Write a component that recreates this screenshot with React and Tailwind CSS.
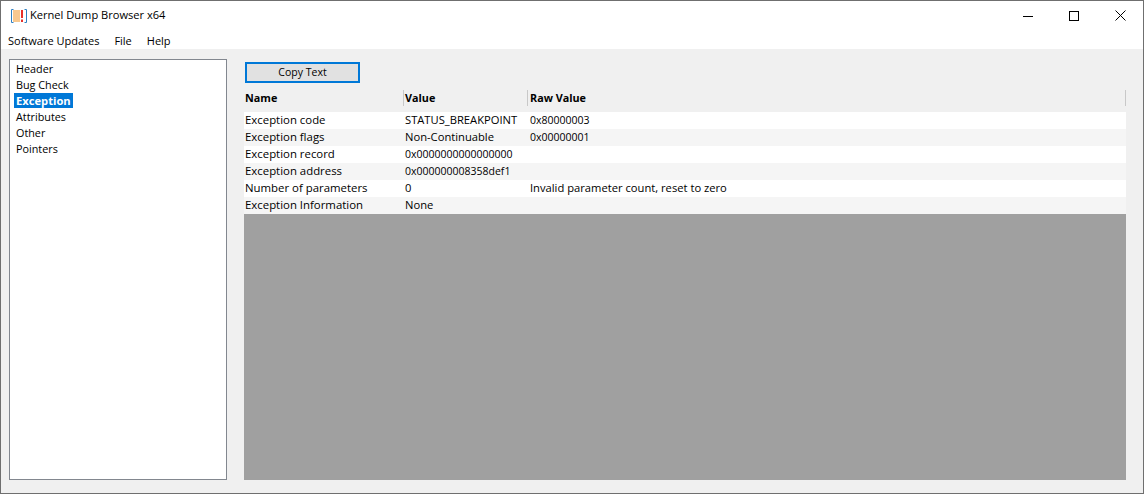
import React from "react";

const font = "font-['Open_Sans','Noto_Sans',sans-serif]";

const sections = ["Header", "Bug Check", "Exception", "Attributes", "Other", "Pointers"];

const rows = [
  ["Exception code", "STATUS_BREAKPOINT", "0x80000003"],
  ["Exception flags", "Non-Continuable", "0x00000001"],
  ["Exception record", "0x0000000000000000", ""],
  ["Exception address", "0x000000008358def1", ""],
  ["Number of parameters", "0", "Invalid parameter count, reset to zero"],
  ["Exception Information", "None", ""],
];

// digits in the original font run narrower than Open Sans
const cellSize = (text) => (text.startsWith("0x") ? "text-[10.5px]" : "text-[11.2px]");

const AppIcon = () => (
  <svg width="18" height="16" viewBox="0 0 18 16" className="ml-[9px] mr-[2px]">
    <path d="M3.5 1.5H1.5V14.5H3.5" fill="none" stroke="#2f7fc1" strokeWidth="1" />
    <path d="M14.5 1.5H16.5V14.5H14.5" fill="none" stroke="#2f7fc1" strokeWidth="1" />
    <rect x="3" y="2" width="7" height="12" fill="#f8c88f" />
    <rect x="11" y="2" width="2" height="8" fill="#e8302a" />
    <rect x="11" y="11.5" width="2" height="2.5" fill="#e8302a" />
  </svg>
);

const WindowButtons = () => (
  <div className="ml-auto flex h-full items-center">
    <div className="flex h-full w-[46px] items-center justify-center">
      <svg width="10" height="10" viewBox="0 0 10 10"><path d="M0 5.5H10" stroke="#000" strokeWidth="1" /></svg>
    </div>
    <div className="flex h-full w-[46px] items-center justify-center">
      <svg width="10" height="10" viewBox="0 0 10 10"><rect x="0.5" y="0.5" width="9" height="9" fill="none" stroke="#000" strokeWidth="1" /></svg>
    </div>
    <div className="flex h-full w-[46px] items-center justify-center">
      <svg width="11" height="11" viewBox="0 0 11 11"><path d="M0.5 0.5L10.5 10.5M10.5 0.5L0.5 10.5" stroke="#000" strokeWidth="1" /></svg>
    </div>
  </div>
);

const App = () => {
  return (
    <div className={`flex h-[494px] w-[1144px] flex-col border border-[#6f6f6f] bg-[#f0f0f0] text-[11.4px] text-black ${font}`}>
      <div className="flex h-[29px] shrink-0 items-center bg-white">
        <AppIcon />
        <span className="text-[11.1px]">Kernel Dump Browser x64</span>
        <WindowButtons />
      </div>
      <div className="flex h-[19px] shrink-0 items-center gap-[15px] bg-white pl-[7px] pt-[3px] text-[11px]">
        <span>Software Updates</span>
        <span>File</span>
        <span>Help</span>
      </div>
      <div className="flex min-h-0 flex-1 pt-[10px] pb-[13px] pl-[8px] pr-[17px]">
        <div className="h-full w-[218px] shrink-0 border border-[#82878f] bg-white pl-[4px] pt-[1px] text-[10.8px]">
          {sections.map((s) =>
            s === "Exception" ? (
              <div key={s} className="flex h-[16px] items-start">
                <span className="bg-[#0078d7] px-[2px] text-[11.2px] font-bold leading-[15px] text-white">{s}</span>
              </div>
            ) : (
              <div key={s} className="flex h-[16px] items-center pl-[2px]">{s}</div>
            )
          )}
        </div>
        <div className="ml-[17px] flex min-w-0 flex-1 flex-col">
          <div className="pl-[1px] pt-[3px]">
            <button className="block h-[21px] w-[115px] border-2 border-[#0078d7] bg-[#e1e1e1] pb-[1px] text-center text-[10.5px] leading-[15px]">
              Copy Text
            </button>
          </div>
          <div className="mt-[6px] flex h-[22px] shrink-0 items-center pb-[4px] text-[10.8px] font-bold">
            <div className="w-[159px] pl-[1px]">Name</div>
            <div className="w-[124px] border-l border-[#c8c8c8] pl-[1px]">Value</div>
            <div className="flex-1 border-l border-r border-[#c8c8c8] pl-[2px]">Raw Value</div>
          </div>
          <div className="mt-[1px] flex min-h-0 flex-1 flex-col bg-[#a0a0a0]">
            {rows.map((r, i) => (
              <div key={r[0]} className={`flex h-[17px] items-baseline leading-[16px] ${i % 2 === 0 ? "bg-white" : "bg-[#f5f5f5]"}`}>
                <div className="w-[160px] pl-[1px]">{r[0]}</div>
                <div className={`w-[125px] pl-[1px] ${cellSize(r[1])}`}>{r[1]}</div>
                <div className={`flex-1 pl-[1px] ${cellSize(r[2])}`}>{r[2]}</div>
              </div>
            ))}
          </div>
        </div>
      </div>
    </div>
  );
};

export default App;
